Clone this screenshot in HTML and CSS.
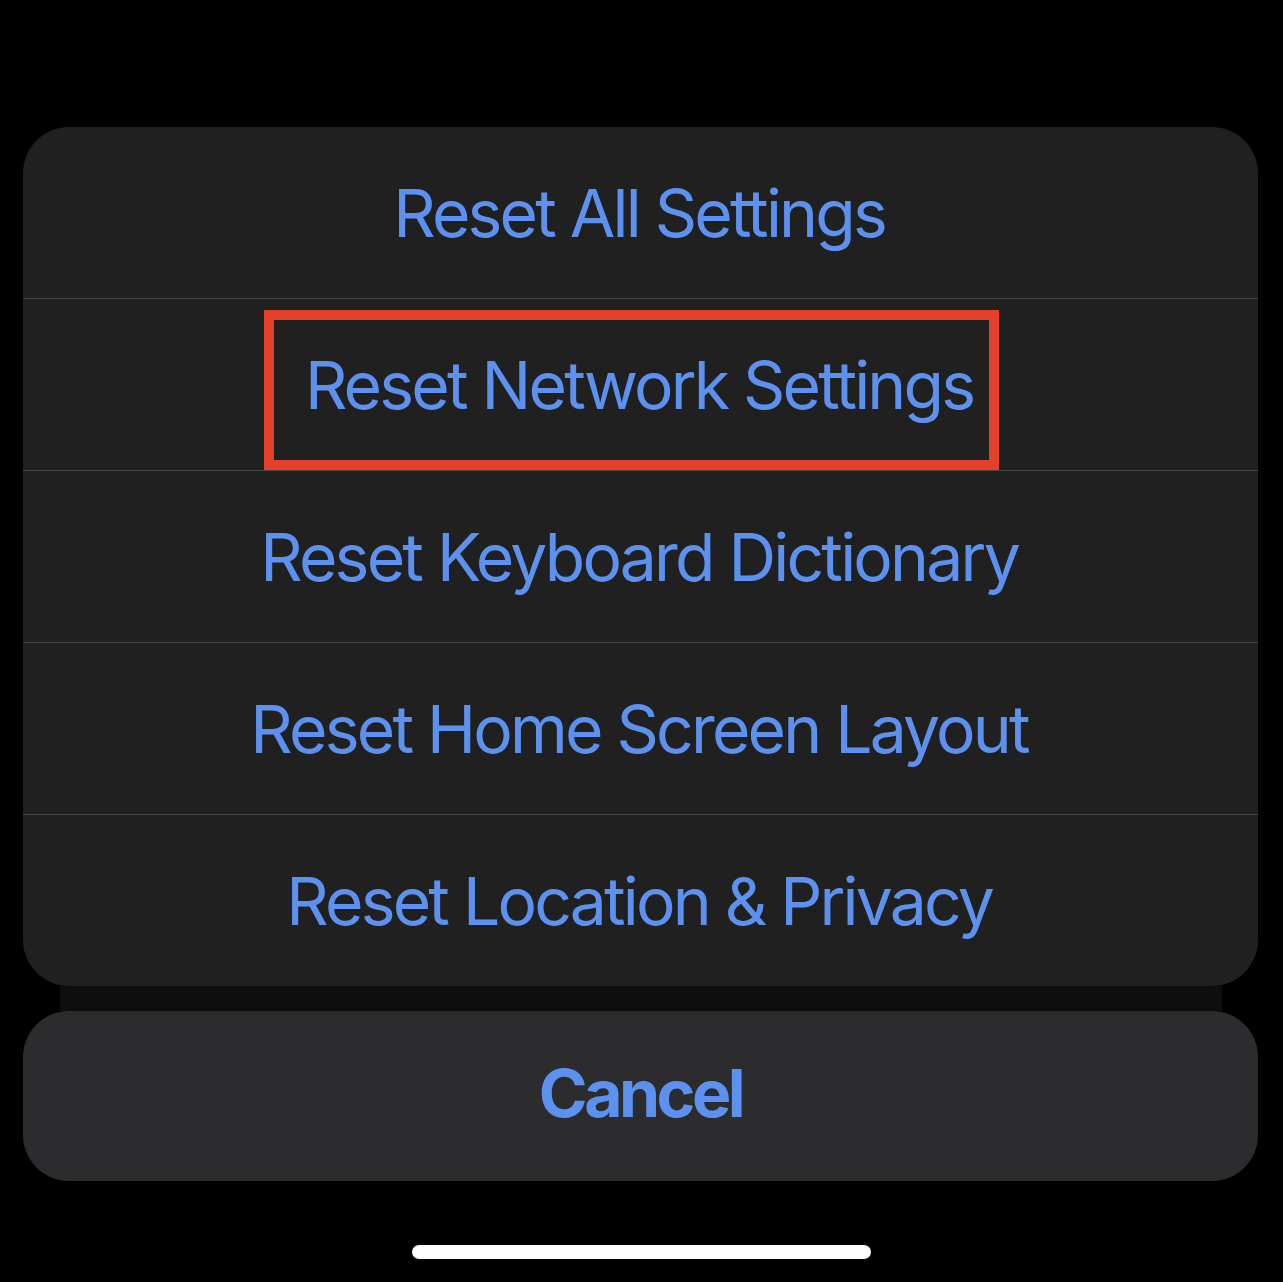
FILE: index.html
```html
<!DOCTYPE html>
<html>
<head>
<meta charset="utf-8">
<link rel="stylesheet" href="styles.css">
</head>
<body>
<div class="screen">
  <div class="sheet">
    <div class="row">Reset All Settings</div>
    <div class="row">Reset Network Settings</div>
    <div class="row">Reset Keyboard Dictionary</div>
    <div class="row">Reset Home Screen Layout</div>
    <div class="row">Reset Location &amp; Privacy</div>
    <div class="highlight"></div>
  </div>
  <div class="strip"></div>
  <div class="cancel">Cancel</div>
  <div class="home-bar"></div>
</div>
</body>
</html>
```
FILE: styles.css
```css
html, body {
  margin: 0;
  padding: 0;
  background: #000;
}
.screen {
  width: 1283px;
  height: 1282px;
  padding-top: 127px;
  box-sizing: border-box;
  display: flex;
  flex-direction: column;
  font-family: Inter, "Noto Sans", sans-serif;
}
.sheet {
  position: relative;
  margin: 0 25px 0 23px;
  background: #202020;
  border-radius: 46px;
  display: flex;
  flex-direction: column;
}
.row {
  height: 171px;
  display: flex;
  align-items: center;
  justify-content: center;
  color: #5d91f0;
  font-size: 66px;
  letter-spacing: -2.8px;
  text-indent: -2.8px;
  border-top: 1px solid #464646;
}
.row:first-child {
  border-top: none;
}
.highlight {
  position: absolute;
  left: 241px;
  top: 183px;
  width: 735px;
  height: 160px;
  box-sizing: border-box;
  border: 10px solid #e5402a;
}
.strip {
  height: 25px;
  margin: 0 61px 0 60px;
  background: #0e0e0e;
}
.cancel {
  height: 170px;
  margin: 0 25px 0 23px;
  background: #2c2c2e;
  border-radius: 46px;
  display: flex;
  align-items: center;
  justify-content: center;
  color: #5d91f0;
  font-size: 66px;
  font-weight: 700;
  letter-spacing: -3.5px;
  padding-bottom: 6px;
  box-sizing: border-box;
}
.home-bar {
  width: 459px;
  height: 14px;
  margin: 64px auto 0;
  background: #fff;
  border-radius: 7px;
}
```
